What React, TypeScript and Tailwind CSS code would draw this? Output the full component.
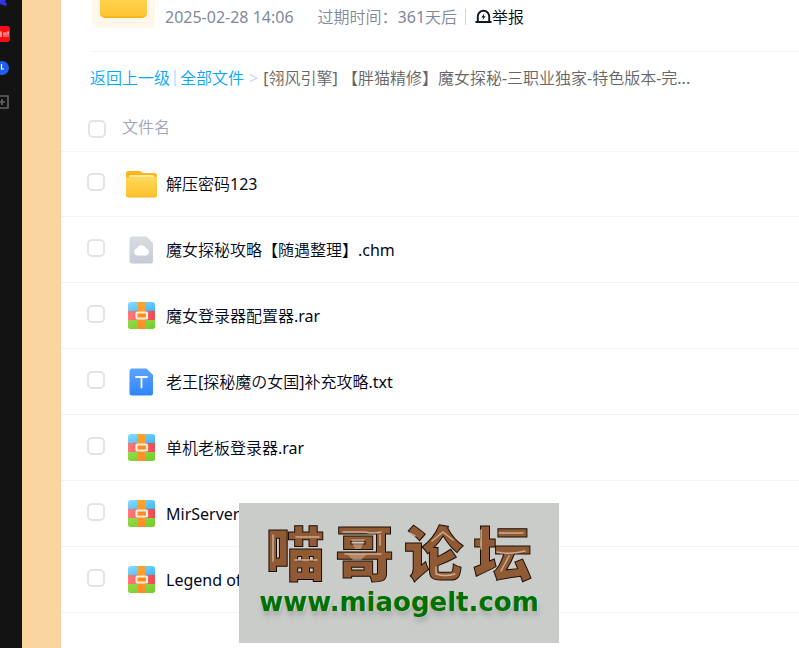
import React from "react";

type Kind = "folder" | "chm" | "rar" | "txt";

const files: { name: string; kind: Kind }[] = [
  { name: "解压密码123", kind: "folder" },
  { name: "魔女探秘攻略【随遇整理】.chm", kind: "chm" },
  { name: "魔女登录器配置器.rar", kind: "rar" },
  { name: "老王[探秘魔の女国]补充攻略.txt", kind: "txt" },
  { name: "单机老板登录器.rar", kind: "rar" },
  { name: "MirServer", kind: "rar" },
  { name: "Legend of", kind: "rar" },
];

function FolderIcon() {
  return (
    <svg width="32" height="32" viewBox="0 0 32 32" aria-hidden="true">
      <defs>
        <linearGradient id="folderFront" x1="0" y1="0" x2="0" y2="1">
          <stop offset="0" stopColor="#ffda5c" />
          <stop offset="1" stopColor="#ffc22c" />
        </linearGradient>
      </defs>
      <path d="M0 5.5A2.5 2.5 0 0 1 2.500 3H13q1.500 0 2.300 1.100Q16 5 17.500 5H28.500A2.500 2.500 0 0 1 31 7.500V20H0Z" fill="#ffb518" />
      <path d="M3 8.500Q3 7 4.200 7H27Q28.300 7 28.300 8.500V12H3Z" fill="#ffe7a0" />
      <path d="M0 9.500Q2.500 9.500 3.500 9H27.500Q29 9.500 31 8.500V27A2.500 2.500 0 0 1 28.500 29.500H2.500A2.500 2.500 0 0 1 0 27Z" fill="#f9b51f" />
      <path d="M0 9.500Q2.500 9.500 3.500 9H27.500Q29 9.500 31 8.500V26A2.500 2.500 0 0 1 28.500 28.500H2.500A2.500 2.500 0 0 1 0 26Z" fill="url(#folderFront)" />
    </svg>
  );
}

function ChmIcon() {
  return (
    <svg width="32" height="32" viewBox="0 0 32 32" aria-hidden="true">
      <defs>
        <linearGradient id="chmPage" x1="0" y1="0" x2="0" y2="1">
          <stop offset="0" stopColor="#d8dde3" />
          <stop offset="1" stopColor="#c5cad6" />
        </linearGradient>
      </defs>
      <path d="M6 2.500H20.500L27 9V27A2.500 2.500 0 0 1 24.500 29.500H6A2.500 2.500 0 0 1 3.500 27V5A2.500 2.500 0 0 1 6 2.500Z" fill="url(#chmPage)" />
      <path d="M11.500 21.500a3.700 3.700 0 0 1-.5-7.300a4.800 4.800 0 0 1 8.900 0a3.700 3.700 0 0 1-.4 7.300Z" fill="#fff" />
    </svg>
  );
}

function TxtIcon() {
  return (
    <svg width="32" height="32" viewBox="0 0 32 32" aria-hidden="true">
      <defs>
        <linearGradient id="txtPage" x1="0" y1="0" x2="0" y2="1">
          <stop offset="0" stopColor="#5da4ff" />
          <stop offset="1" stopColor="#2f84fb" />
        </linearGradient>
      </defs>
      <path d="M6 2.500H20.500L27 9V27A2.500 2.500 0 0 1 24.500 29.500H6A2.500 2.500 0 0 1 3.500 27V5A2.500 2.500 0 0 1 6 2.500Z" fill="url(#txtPage)" />
      <path d="M10 11H21M15.500 11V21.500" stroke="#fff" strokeWidth="1.800" strokeLinecap="round" fill="none" />
    </svg>
  );
}

function RarIcon() {
  return (
    <svg width="32" height="32" viewBox="0 0 32 32" aria-hidden="true">
      <defs>
        <linearGradient id="rarBlue" x1="0" y1="0" x2="1" y2="1">
          <stop offset="0" stopColor="#8bdcff" />
          <stop offset="1" stopColor="#3db6f5" />
        </linearGradient>
        <linearGradient id="rarRed" x1="0" y1="0" x2="1" y2="0">
          <stop offset="0" stopColor="#ff7878" />
          <stop offset="1" stopColor="#ee4a50" />
        </linearGradient>
        <linearGradient id="rarGreen" x1="0" y1="0" x2="1" y2="1">
          <stop offset="0" stopColor="#97d84a" />
          <stop offset="1" stopColor="#70ce28" />
        </linearGradient>
        <linearGradient id="rarBelt" x1="0" y1="0" x2="0" y2="1">
          <stop offset="0" stopColor="#ffa42a" />
          <stop offset="1" stopColor="#ff8c2a" />
        </linearGradient>
      </defs>
      <path d="M4.500 2H26.500A2.500 2.500 0 0 1 29 4.500V11H2V4.500A2.500 2.500 0 0 1 4.500 2Z" fill="url(#rarBlue)" />
      <path d="M2 11H29V20H2Z" fill="url(#rarRed)" />
      <path d="M2 20H29V26.500A2.500 2.500 0 0 1 26.500 29H4.500A2.500 2.500 0 0 1 2 26.500Z" fill="url(#rarGreen)" />
      <rect x="11.500" y="2" width="8" height="27" fill="url(#rarBelt)" />
      <rect x="10.500" y="12.500" width="10.500" height="6" rx="0.800" fill="#ff8a1e" stroke="#fff0dc" strokeWidth="2.200" />
    </svg>
  );
}

const icons: Record<Kind, () => React.JSX.Element> = {
  folder: FolderIcon,
  chm: ChmIcon,
  rar: RarIcon,
  txt: TxtIcon,
};

function Check({ label }: { label: string }) {
  return (
    <input
      type="checkbox"
      aria-label={label}
      className="block size-[18px] shrink-0 appearance-none rounded-[5px] border-2 border-[#e4e4e4] bg-white"
    />
  );
}

function Dock() {
  return (
    <nav className="w-[22px] shrink-0 overflow-hidden bg-[#131313]">
      <svg width="22" height="112" viewBox="0 0 22 112" aria-hidden="true">
        <path d="M0 0H6L5 2L7 4L6 6L3 5L0 4Z" fill="#2f35e0" />
        <rect x="-8" y="26" width="18" height="16" rx="3" fill="#f80d12" />
        <path d="M0 32H2M0 34H2M0 36H2M1 32V37M4 32V37M3 34H6M6 32V37M8 31V37M7 33H9" stroke="#ffd5d5" strokeWidth="0.800" />
        <circle cx="2" cy="68" r="7" fill="#225cf2" />
        <path d="M1.500 64V69H4" fill="none" stroke="#fff" strokeWidth="1.200" />
        <path d="M-4 96H8V108H-4ZM2 99V105M-1 102H5" fill="none" stroke="#626262" strokeWidth="1.700" />
      </svg>
    </nav>
  );
}

function Watermark() {
  return (
    <div className="absolute left-[239px] top-[503px] flex h-[140px] w-[320px] flex-col items-center bg-[#caccc9] pt-4">
      <div className="flex gap-[10px] font-['Noto_Sans_CJK_SC',sans-serif] text-[59px] leading-[64px] font-black text-[#905b34] [-webkit-text-stroke:1px_#1a0d05]">
        <span>喵</span>
        <span>哥</span>
        <span>论</span>
        <span>坛</span>
      </div>
      <svg className="absolute left-0 top-0" width="320" height="90" viewBox="0 0 320 90" fill="none" stroke="#d9b9a4" strokeLinecap="round" strokeWidth="1.500" opacity="0.85" aria-hidden="true">
        <path d="M34 32V58M57 34H80M56 57H78M104 29H126Q134 31 142 29M141 32V42M106 51H142M171 30L176 33M193 38L204 29L214 37M197 64V71Q206 74 216 71M242 27V46M260 30H284M258 49Q270 52 286 48M270 53L262 68" />
        <path d="M112 36H126L122 46H116ZM108 51H128L122 57H114Z" fill="#d9b9a4" stroke="none" opacity="0.6" />
      </svg>
      <div className="mt-1 font-['DejaVu_Sans',sans-serif] text-[26px] leading-[30px] font-bold text-[#007000] [text-shadow:1px_0_0_#dfe8dd,1px_5px_5px_#a8aaa7]">
        www.miaogelt.com
      </div>
    </div>
  );
}

export default function App() {
  return (
    <div className="relative flex h-screen overflow-hidden bg-white font-['Noto_Sans','Noto_Sans_CJK_SC_DemiLight','Noto_Sans_CJK_SC',sans-serif] text-[16px] leading-6 font-normal">
      <Dock />
      <div className="w-[39px] shrink-0 bg-[#fad5a0]" />
      <main className="min-w-0 flex-1">
        <header className="ml-[31px] flex h-[52px] border-b border-[#f2f3f5]">
          <div className="flex h-7 w-[63px] shrink-0 justify-center rounded-b-md bg-[#fff8ea]">
            <div className="h-[18px] w-[47px] rounded-b-[5px] border-b-2 border-[#fbb51c] bg-linear-to-b from-[#ffd24d] to-[#ffc533]" />
          </div>
          <div className="ml-[10px] flex h-6 items-center whitespace-nowrap pt-[10px] text-[#818999]">
            <span>2025-02-28 14:06</span>
            <span className="ml-6">过期时间：361天后</span>
            <span className="ml-2 h-4 w-px bg-[#d4d7e2]" />
            <button type="button" className="ml-[9px] flex items-center text-[#03081a]">
              <svg width="17" height="17" viewBox="0 0 17 17" aria-hidden="true" fill="none">
                <path d="M2.800 13V7.500a5.700 5.700 0 0 1 11.400 0V13M0.500 13H16.500" stroke="#111827" strokeWidth="1.900" />
                <path d="M9.300 4.500L6.300 8.500H8.200L7.700 11L10.700 7.200H8.800Z" fill="#111827" />
              </svg>
              举报
            </button>
          </div>
        </header>

        <nav className="ml-[29px] flex h-[51px] items-center whitespace-nowrap text-[#06a7ff]">
          <a href="#up">返回上一级</a>
          <span className="mx-1 h-4 w-[2px] bg-[#d4e3fb]" />
          <a href="#all">全部文件</a>
          <span className="mx-[5px] text-[#c4d8f4]">&gt;</span>
          <span className="text-[#666666]">[翎风引擎] 【胖猫精修】魔女探秘-三职业独家-特色版本-完...</span>
        </nav>

        <table className="w-full border-collapse">
          <thead>
            <tr className="h-12 border-b border-[#f2f6fd]">
              <th className="w-[61px] p-0 pt-1 pl-[27px]">
                <Check label="全选" />
              </th>
              <th className="p-0 text-left font-normal text-[#a0a6bb]">文件名</th>
            </tr>
          </thead>
          <tbody>
            {files.map((file) => {
              const Icon = icons[file.kind];
              return (
                <tr key={file.name} className="h-[66px] border-b border-[#f0f5fd] first:h-[65px]">
                  <td className="p-0 pb-[3px] pl-[26px]">
                    <Check label={file.name} />
                  </td>
                  <td className="p-0 pt-px">
                    <div className="flex items-center gap-2 pl-1 whitespace-nowrap text-[#03081a]">
                      <Icon />
                      <span>{file.name}</span>
                    </div>
                  </td>
                </tr>
              );
            })}
          </tbody>
        </table>
      </main>
      <Watermark />
    </div>
  );
}
